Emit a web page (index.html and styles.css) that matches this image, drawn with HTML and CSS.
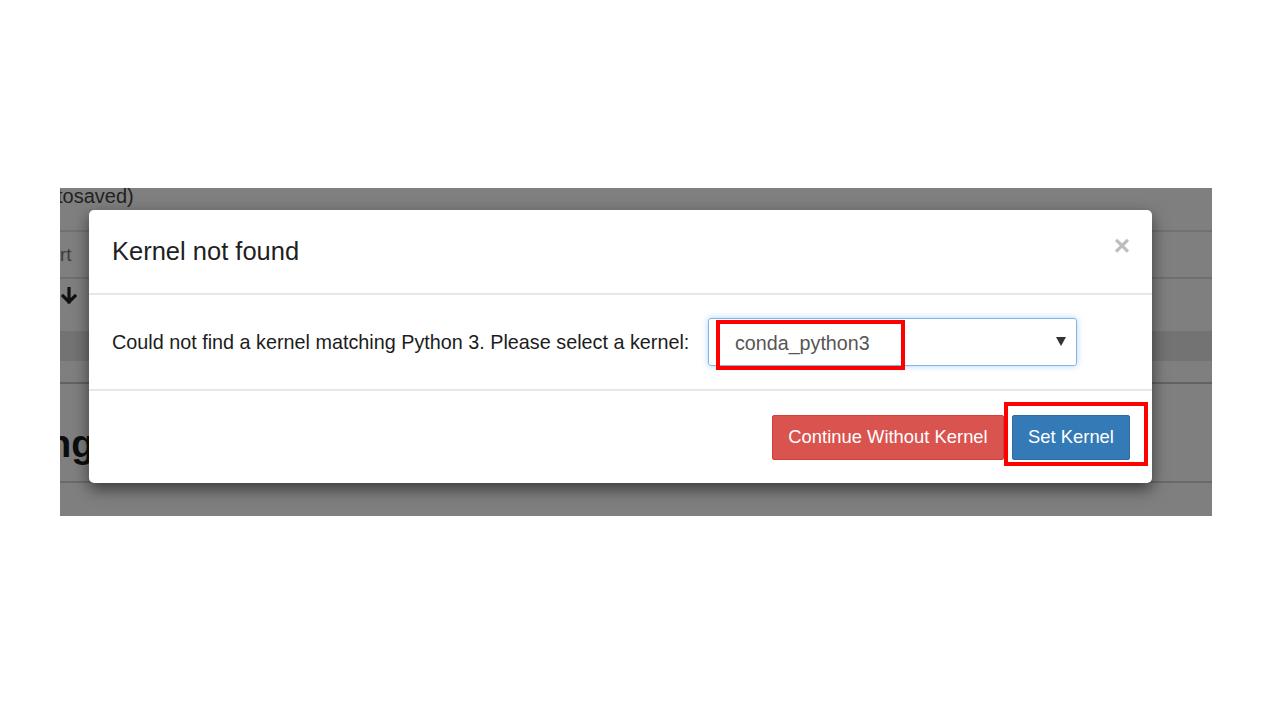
FILE: index.html
```html
<!DOCTYPE html>
<html>
<head>
<meta charset="utf-8">
<link rel="stylesheet" href="styles.css">
</head>
<body>
<div class="shot">
  <div class="bg">
    <div class="bg-row bg-title">tosaved)</div>
    <div class="bg-row bg-menu">rt</div>
    <div class="bg-row bg-tool">
      <svg class="arrow" width="16" height="18" viewBox="0 0 16 18"><path d="M8 1.5 V15 M2 9 L8 15 L14 9" fill="none" stroke="#111" stroke-width="3.2" stroke-linecap="square"/></svg>
    </div>
    <div class="bg-band"></div>
    <div class="bg-row bg-gap"></div>
    <div class="bg-row bg-head">ng</div>
    <div class="bg-rest"></div>
  </div>
  <div class="modal">
    <div class="modal-header">
      <h4 class="modal-title">Kernel not found</h4>
      <span class="close">&times;</span>
    </div>
    <div class="modal-body">
      <span class="msg">Could not find a kernel matching Python 3. Please select a kernel:</span>
      <div class="select">
        <span class="select-value">conda_python3</span>
        <span class="caret"></span>
      </div>
    </div>
    <div class="modal-footer">
      <button class="btn btn-danger">Continue Without Kernel</button>
      <button class="btn btn-primary">Set Kernel</button>
    </div>
  </div>
  <div class="mark mark-select"></div>
  <div class="mark mark-btn"></div>
</div>
</body>
</html>
```
FILE: styles.css
```css
html, body {
  margin: 0;
  padding: 0;
  background: #ffffff;
  width: 1280px;
  height: 720px;
  overflow: hidden;
  font-family: "Liberation Sans", Arial, sans-serif;
}
.shot {
  position: relative;
  margin: 188px 0 0 60px;
  width: 1152px;
  height: 328px;
  background: #7f7f7f;
  overflow: hidden;
}
.bg {
  display: flex;
  flex-direction: column;
  height: 100%;
}
.bg-row {
  color: #1a1a1a;
  border-bottom: 2px solid #6f6f6f;
  white-space: nowrap;
}
.bg-title {
  height: 42px;
  font-size: 20px;
  line-height: 16px;
  margin-left: -3px;
  color: #222;
  border-bottom: 2px solid #727272;
}
.bg-menu {
  height: 45px;
  font-size: 19px;
  line-height: 46px;
  color: #3d3d3d;
  margin-left: 0;
}
.bg-tool {
  height: 52px;
  border-bottom: none;
  display: flex;
  align-items: flex-start;
  padding: 8px 0 0 1px;
  box-sizing: border-box;
}
.bg-band {
  height: 30px;
  background: #737373;
}
.bg-gap {
  height: 21px;
  border-bottom: 2px solid #626262;
}
.bg-head {
  height: 97px;
  font-size: 38px;
  font-weight: bold;
  line-height: 120px;
  color: #0d0d0d;
  margin-left: -12px;
  border-bottom: 2px solid #6a6a6a;
}
.bg-rest {
  flex: 1;
}
.modal {
  position: absolute;
  left: 29px;
  top: 22px;
  width: 1063px;
  height: 273px;
  background: #fff;
  border-radius: 5px;
  box-shadow: 0 6px 16px rgba(0,0,0,0.55);
  display: flex;
  flex-direction: column;
}
.modal-header {
  height: 85px;
  box-sizing: border-box;
  border-bottom: 2px solid #e7e7e7;
  display: flex;
  align-items: center;
  justify-content: space-between;
  padding: 0 22px 0 23px;
}
.modal-title {
  margin: 0;
  font-size: 25.5px;
  font-weight: normal;
  color: #1f1f1f;
}
.close {
  font-size: 28px;
  font-weight: bold;
  color: #bdbdbd;
  line-height: 1;
  margin-top: -12px;
}
.modal-body {
  height: 96px;
  box-sizing: border-box;
  border-bottom: 2px solid #e7e7e7;
  display: flex;
  align-items: center;
  padding: 0 0 0 23px;
}
.msg {
  font-size: 19.8px;
  color: #1c1c1c;
  width: 596px;
  white-space: nowrap;
}
.select {
  width: 369px;
  height: 48px;
  box-sizing: border-box;
  border: 1.5px solid #7fb6e6;
  border-radius: 3px;
  box-shadow: 0 0 6px rgba(102,175,233,0.55);
  display: flex;
  align-items: center;
  justify-content: space-between;
  padding: 2px 10px 0 26px;
}
.select-value {
  font-size: 19.7px;
  color: #555;
}
.caret {
  width: 0;
  height: 0;
  border-left: 5px solid transparent;
  border-right: 5px solid transparent;
  border-top: 9px solid #333;
  margin-top: -4px;
}
.modal-footer {
  flex: 1;
  display: flex;
  justify-content: flex-end;
  align-items: center;
  gap: 8px;
  padding: 0 22px 0 0;
}
.btn {
  height: 45px;
  font-family: "Liberation Sans", Arial, sans-serif;
  font-size: 18.4px;
  color: #fff;
  border-radius: 2px;
  padding: 0;
  margin: 0;
  white-space: nowrap;
}
.btn-danger {
  width: 232px;
  background: #d9534f;
  border: 1px solid #d43f3a;
}
.btn-primary {
  width: 118px;
  background: #337ab7;
  border: 1px solid #2e6da4;
}
.mark {
  position: absolute;
  border: 4px solid #ff0000;
  box-sizing: border-box;
}
.mark-select {
  left: 656px;
  top: 132px;
  width: 189px;
  height: 50px;
}
.mark-btn {
  left: 944px;
  top: 214px;
  width: 144px;
  height: 64px;
}
```
